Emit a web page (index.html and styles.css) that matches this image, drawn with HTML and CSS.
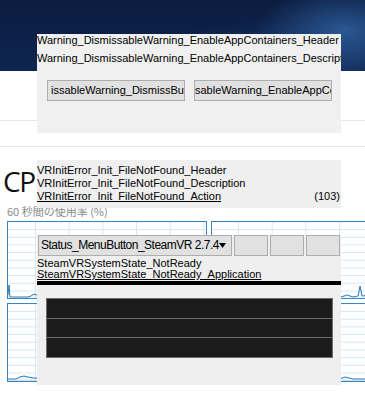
FILE: index.html
```html
<!DOCTYPE html>
<html lang="ja">
<head>
<meta charset="utf-8">
<title>SteamVR</title>
<link rel="stylesheet" href="styles.css">
</head>
<body>
<div class="desk">
  <header class="banner"></header>
  <div class="rule rule-a"></div>
  <div class="rule rule-b"></div>
  <h1 class="cp">CP</h1>
  <div class="usage">60 秒間の使用率 (%)</div>
  <div class="graphs">
    <div class="graph graph-left">
      <svg class="plot" viewBox="0 0 198 76" preserveAspectRatio="none">
        <polygon class="fill" points="0,76 0,73 1,63 2,75 20,75 23,74 26,72 29,73 32,71 36,73 60,74 198,74 198,76"/>
        <polyline class="line" points="0,73 1,63 2,75 20,75 23,74 26,72 29,73 32,71 36,73 60,74 198,74"/>
      </svg>
    </div>
    <div class="graph graph-right">
      <svg class="plot" viewBox="0 0 160 76" preserveAspectRatio="none">
        <polygon class="fill" points="0,76 0,75 129,75 133,74 136,73 139,74 142,75 147,74 149,64 151,74 160,73 160,76"/>
        <polyline class="line" points="0,75 129,75 133,74 136,73 139,74 142,75 147,74 149,64 151,74 160,73"/>
      </svg>
    </div>
    <div class="graph graph-left">
      <svg class="plot" viewBox="0 0 198 77" preserveAspectRatio="none">
        <polygon class="fill" points="0,77 0,75 8,75 12,73 16,72 20,73 25,74 40,74 198,75 198,77"/>
        <polyline class="line" points="0,75 8,75 12,73 16,72 20,73 25,74 40,74 198,75"/>
      </svg>
    </div>
    <div class="graph graph-right">
      <svg class="plot" viewBox="0 0 160 77" preserveAspectRatio="none">
        <polygon class="fill" points="0,77 0,75 129,75 131,74 134,73 138,74 142,75 160,75 160,77"/>
        <polyline class="line" points="0,75 129,75 131,74 134,73 138,74 142,75 160,75"/>
      </svg>
    </div>
  </div>
</div>

<section class="win warn">
  <div class="warn-line">Warning_DismissableWarning_EnableAppContainers_Header</div>
  <div class="warn-line">Warning_DismissableWarning_EnableAppContainers_Description</div>
  <div class="warn-actions">
    <div class="btn">issableWarning_DismissButton</div>
    <div class="btn btn-b">sableWarning_EnableAppContainers</div>
  </div>
</section>

<section class="win err">
  <div class="err-line">VRInitError_Init_FileNotFound_Header</div>
  <div class="err-line">VRInitError_Init_FileNotFound_Description</div>
  <div class="err-line err-action"><span class="link">VRInitError_Init_FileNotFound_Action</span><span>(103)</span></div>
</section>

<section class="win status">
  <div class="status-bar">
    <div class="menu"><span>Status_MenuButton_SteamVR 2.7.4</span><svg class="caret" viewBox="0 0 7 5" width="7" height="5"><polygon points="0,0 7,0 3.5,5"/></svg></div>
    <div class="tool"></div>
    <div class="tool"></div>
    <div class="tool"></div>
  </div>
  <div class="state">SteamVRSystemState_NotReady</div>
  <div class="state link">SteamVRSystemState_NotReady_Application</div>
  <div class="black-bar"></div>
  <div class="devices">
    <div class="device"></div>
    <div class="device"></div>
    <div class="device"></div>
  </div>
</section>
</body>
</html>
```
FILE: styles.css
```css
html, body {
  margin: 0;
  padding: 0;
  background: #ffffff;
}
body {
  width: 365px;
  height: 402px;
  overflow: hidden;
  position: relative;
  font-family: "Liberation Sans", Arial, sans-serif;
}
.desk {
  width: 365px;
}
.banner {
  height: 71px;
  background:
    radial-gradient(ellipse 90px 45px at 345px 30px, rgba(52, 105, 170, 0.75) 0%, rgba(52, 105, 170, 0) 100%),
    radial-gradient(ellipse 140px 40px at 280px 60px, rgba(30, 70, 125, 0.6) 0%, rgba(30, 70, 125, 0) 100%),
    linear-gradient(180deg, #0b1c3f 0%, #0e2551 100%);
}
.rule {
  height: 1px;
  background: #e6e6e6;
}
.rule-a {
  margin-top: 49px;
}
.rule-b {
  margin-top: 25px;
}
.cp {
  margin: 20px 0 0 3px;
  height: 28px;
  font-family: "Open Sans", sans-serif;
  font-weight: 400;
  font-size: 28px;
  line-height: 28px;
  letter-spacing: -1.5px;
  color: #111;
}
.usage {
  margin: 10px 0 0 7px;
  height: 13px;
  font-family: "Noto Sans CJK JP", sans-serif;
  font-size: 11px;
  line-height: 13px;
  color: #8a8a8a;
}
.graphs {
  margin: 3px 0 0 7px;
  display: grid;
  grid-template-columns: 200px 160px;
  grid-template-rows: 78px 79px;
  column-gap: 4px;
  row-gap: 4px;
}
.graph {
  box-sizing: border-box;
  border: 1px solid #3b84bd;
  background-color: #ffffff;
  background-image:
    linear-gradient(to right, #d8e7f2 1px, transparent 1px),
    linear-gradient(to bottom, #d8e7f2 1px, transparent 1px);
  background-size: 33.7px 100%, 100% 7.7px;
  overflow: hidden;
}
.graph-left {
  background-position: 27px 0, 0 7px;
}
.graph-right {
  border-right: none;
  background-position: 26px 0, 0 7px;
}
.plot {
  display: block;
  width: 100%;
  height: 100%;
}
.plot .fill {
  fill: rgba(17, 125, 187, 0.08);
  stroke: none;
}
.plot .line {
  fill: none;
  stroke: #2f78b4;
  stroke-width: 1;
}

/* overlaid windows */
.win {
  position: absolute;
  left: 37px;
  width: 304px;
  background: #f0f0f0;
  overflow: hidden;
  font-size: 11px;
  color: #000;
  white-space: nowrap;
}
.warn {
  top: 34px;
  height: 99px;
}
.warn-line {
  line-height: 12px;
}
.warn-line + .warn-line {
  margin-top: 6px;
}
.warn-actions {
  display: flex;
  gap: 9px;
  margin-top: 16px;
  padding-left: 10px;
}
.btn {
  box-sizing: border-box;
  width: 138px;
  height: 21px;
  border: 1px solid #adadad;
  background: #e1e1e1;
  line-height: 19px;
  padding-left: 3px;
  overflow: hidden;
}
.btn-b {
  padding-left: 0;
  text-indent: 0;
}
.err {
  top: 160px;
  height: 48px;
  padding-top: 4px;
  box-sizing: border-box;
  background: #efefef;
}
.err-line {
  line-height: 13px;
}
.err-action {
  display: flex;
  justify-content: space-between;
  padding-right: 1px;
}
.link {
  text-decoration: underline;
}
.status {
  top: 235px;
  height: 150px;
  background: #efefef;
}
.status-bar {
  display: flex;
  gap: 2px;
  height: 21px;
  padding-left: 1px;
}
.menu {
  box-sizing: border-box;
  width: 194px;
  height: 21px;
  border: 1px solid #adadad;
  background: #e1e1e1;
  display: flex;
  align-items: center;
  padding-left: 2px;
  font-size: 12px;
  letter-spacing: -0.5px;
  line-height: 19px;
}
.caret {
  margin-left: auto;
  margin-right: 5px;
  fill: #000;
}
.tool {
  box-sizing: border-box;
  width: 34px;
  height: 21px;
  border: 1px solid #adadad;
  background: #e1e1e1;
}
.state {
  line-height: 11px;
}
.status-bar + .state {
  margin-top: 2px;
}
.black-bar {
  margin-top: 1px;
  height: 4px;
  background: #000;
}
.devices {
  margin: 13px 0 0 9px;
  width: 287px;
  height: 60px;
  box-sizing: border-box;
  border: 1px solid #6e6e6e;
  background: #6e6e6e;
  display: grid;
  grid-template-rows: 19px 18px 19px;
  row-gap: 1px;
}
.device {
  background: #1b1b1b;
}
```
